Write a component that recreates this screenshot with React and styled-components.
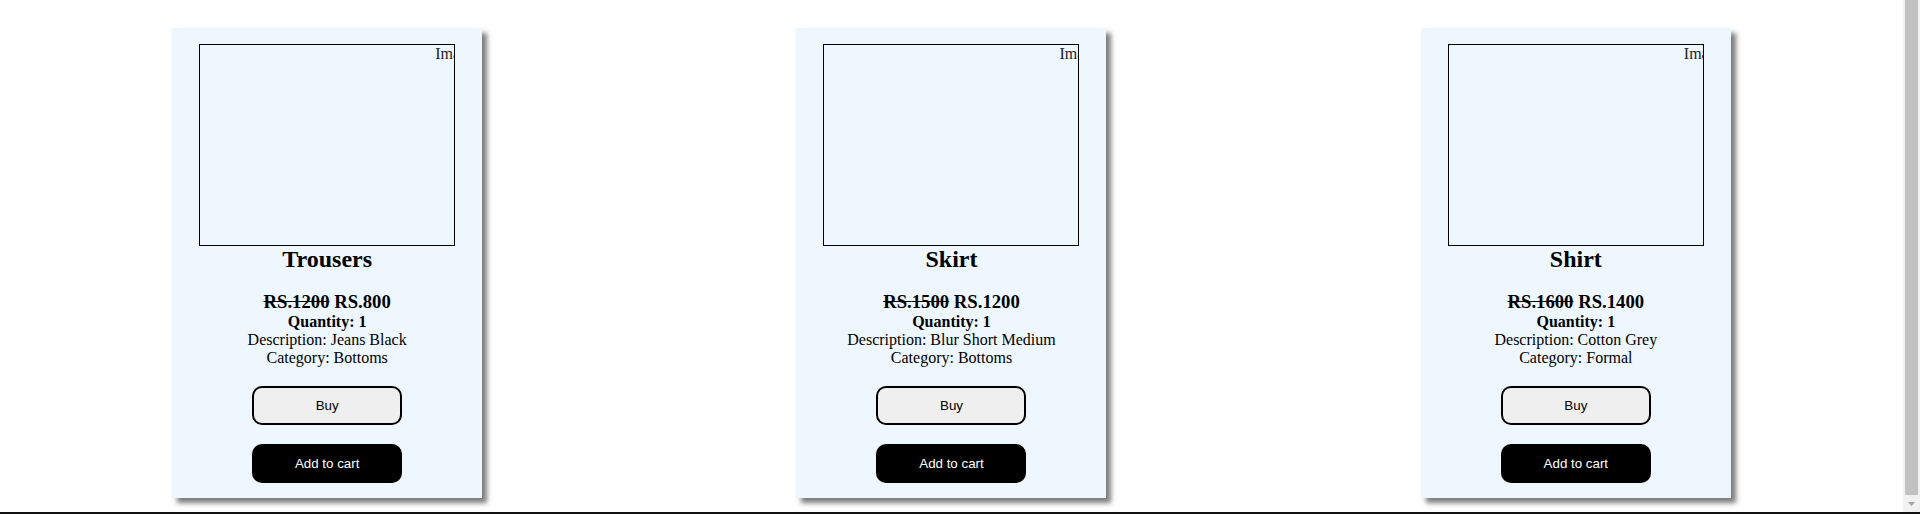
import React from 'react'
import styled, { createGlobalStyle } from 'styled-components'

const products = [
    { name: 'Trousers', oldPrice: 1200, price: 800, quantity: 1, description: 'Jeans Black', category: 'Bottoms' },
    { name: 'Skirt', oldPrice: 1500, price: 1200, quantity: 1, description: 'Blur Short Medium', category: 'Bottoms' },
    { name: 'Shirt', oldPrice: 1600, price: 1400, quantity: 1, description: 'Cotton Grey', category: 'Formal' },
]

const GlobalStyle = createGlobalStyle`
  html, body {
    margin: 0;
    padding: 0;
    background: #fff;
    overflow: hidden;
  }
  * {
    box-sizing: border-box;
  }
`

const App = () => {
    return (
        <Frame>
            <GlobalStyle />
            <Main>
                <Grid>
                    {products.map((p) => (
                        <Card key={p.name}>
                            <Picture>Image</Picture>
                            <Title>{p.name}</Title>
                            <Price>
                                <del>RS.{p.oldPrice}</del> RS.{p.price}
                            </Price>
                            <Quantity>Quantity: {p.quantity}</Quantity>
                            <Line>Description: {p.description}</Line>
                            <Line>Category: {p.category}</Line>
                            <Actions>
                                <Button type='button'>Buy</Button>
                                <Button type='button' dark>Add to cart</Button>
                            </Actions>
                        </Card>
                    ))}
                </Grid>
            </Main>
            <Scrollbar>
                <Thumb />
                <Arrow>
                    <svg width='7' height='4' viewBox='0 0 7 4'>
                        <path d='M0 0 L7 0 L3.5 4 Z' fill='#a3a3a3' />
                    </svg>
                </Arrow>
            </Scrollbar>
        </Frame>
    )
}

const Frame = styled.div`
  display: flex;
  height: 514px;
  border-bottom: 2px solid #111;
  overflow: hidden;
`

const Main = styled.main`
  flex: 1;
  padding: 28px 15px 0;
`

const Grid = styled.div`
  display: grid;
  grid-template-columns: repeat(3, 1fr);
  justify-items: center;
`

const Card = styled.div`
  width: 310px;
  padding: 16px 0 15px;
  background: #eff7fe;
  box-shadow: 5px 5px 5px #7c7c7c;
  display: flex;
  flex-direction: column;
  align-items: center;
  font-family: "Liberation Serif", "Times New Roman", serif;
  color: #000;
  text-align: center;
`

const Picture = styled.div`
  width: 256px;
  height: 202px;
  border: 1px solid #000;
  overflow: hidden;
  white-space: nowrap;
  text-align: left;
  text-indent: 235px;
  font-size: 16px;
  line-height: 18px;
  color: #222;
`

const Title = styled.h2`
  margin: 0 0 18px;
  font-size: 24px;
  line-height: 27px;
  font-weight: bold;
`

const Price = styled.h3`
  margin: 0;
  font-size: 18.72px;
  line-height: 22px;
  font-weight: bold;
`

const Quantity = styled.p`
  margin: 0;
  font-size: 16px;
  line-height: 18px;
  font-weight: bold;
`

const Line = styled.p`
  margin: 0;
  font-size: 16px;
  line-height: 18px;
`

const Actions = styled.div`
  display: flex;
  flex-direction: column;
  gap: 19px;
  margin-top: 19px;
`

const Button = styled.button`
  width: 150px;
  height: 39px;
  border: 2px solid #000;
  border-radius: 10px;
  background: ${(p) => (p.dark ? '#000' : '#efefef')};
  color: ${(p) => (p.dark ? '#fff' : '#000')};
  font-family: "Liberation Sans", Arial, sans-serif;
  font-size: 13.333px;
  cursor: pointer;
`

const Scrollbar = styled.div`
  width: 17px;
  display: flex;
  flex-direction: column;
  background: #f1f1f1;
`

const Thumb = styled.div`
  flex: 1;
  margin: 0 2px;
  background: #c1c1c1;
`

const Arrow = styled.div`
  height: 17px;
  display: flex;
  align-items: center;
  justify-content: center;
`

export default App
